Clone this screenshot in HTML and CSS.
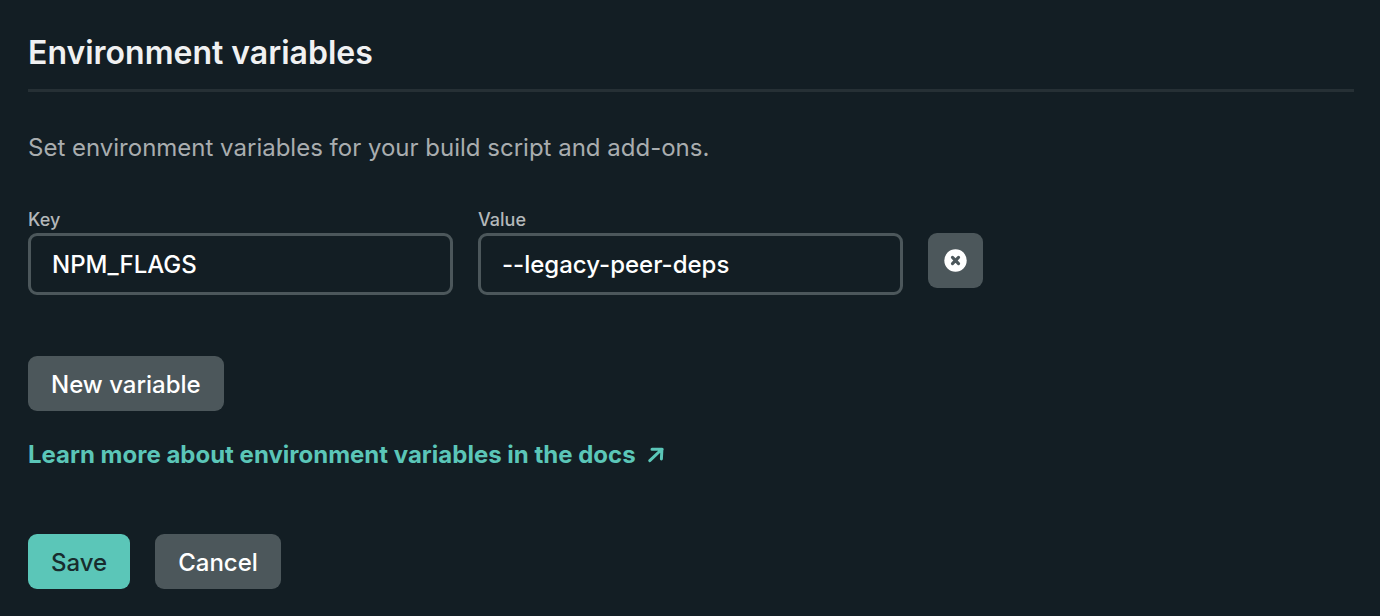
FILE: index.html
```html
<!DOCTYPE html>
<html lang="en">
<head>
<meta charset="utf-8">
<title>Environment variables</title>
<link rel="stylesheet" href="styles.css">
</head>
<body>
<main class="panel">
  <h1 class="title">Environment variables</h1>
  <p class="intro">Set environment variables for your build script and add-ons.</p>
  <form class="form">
    <div class="row">
      <div class="field">
        <label class="label" for="key">Key</label>
        <input class="input" id="key" type="text" value="NPM_FLAGS">
      </div>
      <div class="field">
        <label class="label" for="value">Value</label>
        <input class="input" id="value" type="text" value="--legacy-peer-deps">
      </div>
      <button class="button remove" type="button" aria-label="Remove variable">
        <svg class="remove-icon" viewBox="0 0 22 22" aria-hidden="true"><circle cx="11" cy="11" r="10.7" fill="#fff"/><path d="M8.1 8.1l5.8 5.8M13.9 8.1l-5.8 5.8" stroke="#4c575b" stroke-width="3" stroke-linecap="round"/></svg>
      </button>
    </div>
    <button class="button new" type="button">New variable</button>
    <a class="docs" href="#docs">Learn more about environment variables in the docs
      <svg class="arrow" viewBox="0 0 16 16" aria-hidden="true"><path d="M4 2.2h10.2M13.9 2.2L13.4 12M13.6 2.5L1.8 13.6" fill="none" stroke="currentColor" stroke-width="3" stroke-linecap="round"/></svg>
    </a>
    <div class="actions">
      <button class="button save" type="submit">Save</button>
      <button class="button" type="button">Cancel</button>
    </div>
  </form>
</main>
</body>
</html>
```
FILE: styles.css
```css
* { box-sizing: border-box; }
body {
  margin: 0;
  background: #131e24;
  color: #fff;
  font-family: Inter, "Liberation Sans", sans-serif;
}
.panel { padding: 32px 26px 27px 28px; }
.title {
  margin: 0;
  padding-bottom: 16px;
  border-bottom: 3px solid #263035;
  color: #f0f1f2;
  font-size: 32px;
  line-height: 41px;
  font-weight: 600;
}
.intro {
  margin: 40px 0 0;
  color: #a9adaf;
  font-size: 24px;
  line-height: 32px;
}
.form { display: flex; flex-direction: column; align-items: flex-start; }
.row { display: flex; align-items: flex-start; gap: 25px; margin-top: 44px; width: 100%; }
.field { display: flex; flex-direction: column; flex: 0 1 425px; min-width: 0; }
.label { margin-bottom: 1px; color: #b4b8ba; font-size: 18px; line-height: 24px; font-weight: 500; }
.input {
  width: 100%;
  margin: 0;
  padding: 13px 21px 11px;
  border: 3px solid #4c575b;
  border-radius: 9px;
  background: transparent;
  color: #fff;
  font: 500 24px/32px Inter, "Liberation Sans", sans-serif;
}
.button {
  margin: 0;
  padding: 13px 23px 11px;
  border: 0;
  border-radius: 9px;
  background: #4c575b;
  color: #fff;
  font: 500 24px/31px Inter, "Liberation Sans", sans-serif;
}
.remove { display: flex; margin-top: 25px; padding: 16px; }
.remove-icon { width: 23px; height: 23px; }
.new { margin-top: 61px; }
.docs {
  display: inline-flex;
  align-items: center;
  gap: 12px;
  margin-top: 28px;
  color: #5bc6b8;
  font-size: 24px;
  line-height: 32px;
  font-weight: 700;
  text-decoration: none;
}
.arrow { width: 16px; height: 16px; }
.actions { display: flex; gap: 25px; margin-top: 63px; }
.save { background: #5bc6b8; color: #182c2e; }
```
